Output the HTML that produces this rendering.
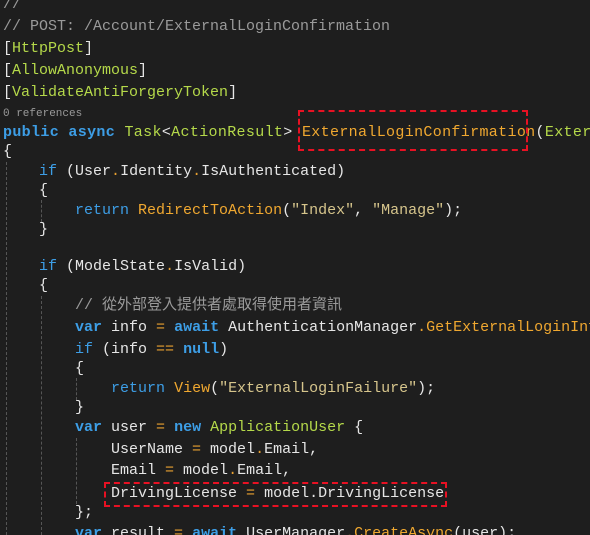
<!DOCTYPE html>
<html><head><meta charset="utf-8"><style>
html,body{margin:0;width:590px;height:535px;overflow:hidden}
body{background:#1e1e1e;position:relative;font-family:"Liberation Mono","Noto Sans CJK TC",monospace;font-size:15px;color:#e6e6e6}
.l{position:absolute;left:3px;height:22px;line-height:22px;white-space:pre}
.k{color:#3d9ee6}.b{font-weight:bold}.t{color:#b5d94a}.m{color:#f0a830}.s{color:#d6c58c}.c{color:#9a9a9a}.o{color:#e8a030}
.g{position:absolute;width:0;border-left:1px dashed #555}
.box{position:absolute;border:2px dashed #e81123}
</style></head><body>
<div class="g" style="left:6px;top:162px;height:373px"></div>
<div class="g" style="left:41px;top:200px;height:22px"></div>
<div class="g" style="left:41px;top:296px;height:239px"></div>
<div class="g" style="left:76px;top:378px;height:22px"></div>
<div class="g" style="left:76px;top:438px;height:66px"></div>
<div class="l c" style="top:-6px">//</div>
<div class="l c" style="top:16px">// POST: /Account/ExternalLoginConfirmation</div>
<div class="l" style="top:38px">[<span class="t">HttpPost</span>]</div>
<div class="l" style="top:60px">[<span class="t">AllowAnonymous</span>]</div>
<div class="l" style="top:82px">[<span class="t">ValidateAntiForgeryToken</span>]</div>
<div class="l c" style="top:105px;font-size:11px;line-height:18px">0 references</div>
<div class="l" style="top:122px;letter-spacing:0.34px"><span class="k b">public async</span> <span class="t">Task</span>&lt;<span class="t">ActionResult</span>&gt; <span class="m">ExternalLoginConfirmation</span>(<span class="t">ExternalLoginConfirmationViewModel</span></div>
<div class="l" style="top:141px">{</div>
<div class="l" style="top:161px">    <span class="k">if</span> (User<span class="o">.</span>Identity<span class="o">.</span>IsAuthenticated)</div>
<div class="l" style="top:180px">    {</div>
<div class="l" style="top:200px">        <span class="k">return</span> <span class="m">RedirectToAction</span>(<span class="s">"Index"</span>, <span class="s">"Manage"</span>);</div>
<div class="l" style="top:219px">    }</div>
<div class="l" style="top:256px">    <span class="k">if</span> (ModelState<span class="o">.</span>IsValid)</div>
<div class="l" style="top:275px">    {</div>
<div class="l c" style="top:295px">        // 從外部登入提供者處取得使用者資訊</div>
<div class="l" style="top:317px">        <span class="k b">var</span> info <span class="o">=</span> <span class="k b">await</span> AuthenticationManager<span class="o">.</span><span class="m">GetExternalLoginInfoAsync</span>();</div>
<div class="l" style="top:339px">        <span class="k">if</span> (info <span class="o">==</span> <span class="k b">null</span>)</div>
<div class="l" style="top:358px">        {</div>
<div class="l" style="top:378px">            <span class="k">return</span> <span class="m">View</span>(<span class="s">"ExternalLoginFailure"</span>);</div>
<div class="l" style="top:397px">        }</div>
<div class="l" style="top:417px">        <span class="k b">var</span> user <span class="o">=</span> <span class="k b">new</span> <span class="t">ApplicationUser</span> {</div>
<div class="l" style="top:439px">            UserName <span class="o">=</span> model<span class="o">.</span>Email,</div>
<div class="l" style="top:460px">            Email <span class="o">=</span> model<span class="o">.</span>Email,</div>
<div class="l" style="top:483px">            DrivingLicense <span class="o">=</span> model.DrivingLicense</div>
<div class="l" style="top:502px">        };</div>
<div class="l" style="top:523px">        <span class="k b">var</span> result <span class="o">=</span> <span class="k b">await</span> UserManager<span class="o">.</span><span class="m">CreateAsync</span>(user);</div>
<div class="box" style="left:298px;top:110px;width:226px;height:37px"></div>
<div class="box" style="left:104px;top:482px;width:339px;height:21px"></div>
</body></html>
